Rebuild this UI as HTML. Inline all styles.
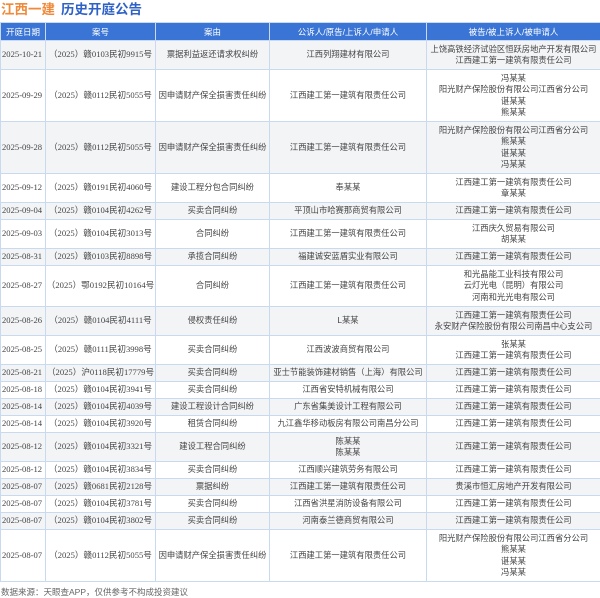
<!DOCTYPE html>
<html><head><meta charset="utf-8"><style>
*{margin:0;padding:0;box-sizing:border-box}
body{width:600px;height:597px;background:#fff;font-family:"Liberation Sans","Noto Sans CJK SC",sans-serif;color:#333;position:relative;overflow:hidden}
.title{position:absolute;left:1px;top:1px;font-size:13.5px;font-weight:bold;line-height:18px}
.title .a{color:#f08a3b}.title .b{color:#2f62c6;margin-left:6px}
table{position:absolute;left:0;top:22px;width:600px;border-collapse:collapse;table-layout:fixed;font-size:8.3px}
th{background:#3a74d4;color:#fff;height:18px;font-weight:normal;font-size:8.5px;border:1px solid #c9d9ef;line-height:10px}
td{border:1px solid #c9d9ef;text-align:center;vertical-align:middle;line-height:11.4px;padding:0;color:#444}
tr.g td{background:#f3f4f6}
tr.h1{height:17px}tr.h2{height:29px}tr.h3{height:41px}tr.h4{height:52px}
td.d{font-family:"Liberation Serif","Noto Serif CJK SC",serif;font-size:8.6px;text-align:left;padding-left:1px}
td.n{font-family:"Liberation Serif","Noto Sans CJK SC",serif;font-size:8.6px}
.foot{position:absolute;left:1px;top:586px;font-size:8.5px;color:#666}
</style></head><body>
<div class="title"><span class="a">江西一建</span><span class="b">历史开庭公告</span></div>
<table>
<colgroup><col style="width:45px"><col style="width:110px"><col style="width:114px"><col style="width:157px"><col style="width:174px"></colgroup>
<tr><th>开庭日期</th><th>案号</th><th>案由</th><th>公诉人/原告/上诉人/申请人</th><th>被告/被上诉人/被申请人</th></tr>
<tr class="g h2"><td class="d">2025-10-21</td><td class="n">（2025）赣0103民初9915号</td><td>票据利益返还请求权纠纷</td><td>江西列翔建材有限公司</td><td>上饶高铁经济试验区恒跃房地产开发有限公司<br>江西建工第一建筑有限责任公司</td></tr>
<tr class="h4"><td class="d">2025-09-29</td><td class="n">（2025）赣0112民初5055号</td><td>因申请财产保全损害责任纠纷</td><td>江西建工第一建筑有限责任公司</td><td>冯某某<br>阳光财产保险股份有限公司江西省分公司<br>谌某某<br>熊某某</td></tr>
<tr class="g h4"><td class="d">2025-09-28</td><td class="n">（2025）赣0112民初5055号</td><td>因申请财产保全损害责任纠纷</td><td>江西建工第一建筑有限责任公司</td><td>阳光财产保险股份有限公司江西省分公司<br>熊某某<br>谌某某<br>冯某某</td></tr>
<tr class="h2"><td class="d">2025-09-12</td><td class="n">（2025）赣0191民初4060号</td><td>建设工程分包合同纠纷</td><td>奉某某</td><td>江西建工第一建筑有限责任公司<br>章某某</td></tr>
<tr class="g h1"><td class="d">2025-09-04</td><td class="n">（2025）赣0104民初4262号</td><td>买卖合同纠纷</td><td>平顶山市哈赛那商贸有限公司</td><td>江西建工第一建筑有限责任公司</td></tr>
<tr class="h2"><td class="d">2025-09-03</td><td class="n">（2025）赣0104民初3013号</td><td>合同纠纷</td><td>江西建工第一建筑有限责任公司</td><td>江西庆久贸易有限公司<br>胡某某</td></tr>
<tr class="g h1"><td class="d">2025-08-31</td><td class="n">（2025）赣0103民初8898号</td><td>承揽合同纠纷</td><td>福建诚安蓝盾实业有限公司</td><td>江西建工第一建筑有限责任公司</td></tr>
<tr class="h3"><td class="d">2025-08-27</td><td class="n">（2025）鄂0192民初10164号</td><td>合同纠纷</td><td>江西建工第一建筑有限责任公司</td><td>和光晶能工业科技有限公司<br>云灯光电（昆明）有限公司<br>河南和光光电有限公司</td></tr>
<tr class="g h2"><td class="d">2025-08-26</td><td class="n">（2025）赣0104民初4111号</td><td>侵权责任纠纷</td><td>L某某</td><td>江西建工第一建筑有限责任公司<br>永安财产保险股份有限公司南昌中心支公司</td></tr>
<tr class="h2"><td class="d">2025-08-25</td><td class="n">（2025）赣0111民初3998号</td><td>买卖合同纠纷</td><td>江西波波商贸有限公司</td><td>张某某<br>江西建工第一建筑有限责任公司</td></tr>
<tr class="g h1"><td class="d">2025-08-21</td><td class="n">（2025）沪0118民初17779号</td><td>买卖合同纠纷</td><td>亚士节能装饰建材销售（上海）有限公司</td><td>江西建工第一建筑有限责任公司</td></tr>
<tr class="h1"><td class="d">2025-08-18</td><td class="n">（2025）赣0104民初3941号</td><td>买卖合同纠纷</td><td>江西省安特机械有限公司</td><td>江西建工第一建筑有限责任公司</td></tr>
<tr class="g h1"><td class="d">2025-08-14</td><td class="n">（2025）赣0104民初4039号</td><td>建设工程设计合同纠纷</td><td>广东省集美设计工程有限公司</td><td>江西建工第一建筑有限责任公司</td></tr>
<tr class="h1"><td class="d">2025-08-14</td><td class="n">（2025）赣0104民初3920号</td><td>租赁合同纠纷</td><td>九江鑫华移动板房有限公司南昌分公司</td><td>江西建工第一建筑有限责任公司</td></tr>
<tr class="g h2"><td class="d">2025-08-12</td><td class="n">（2025）赣0104民初3321号</td><td>建设工程合同纠纷</td><td>陈某某<br>陈某某</td><td>江西建工第一建筑有限责任公司</td></tr>
<tr class="h1"><td class="d">2025-08-12</td><td class="n">（2025）赣0104民初3834号</td><td>买卖合同纠纷</td><td>江西顺兴建筑劳务有限公司</td><td>江西建工第一建筑有限责任公司</td></tr>
<tr class="g h1"><td class="d">2025-08-07</td><td class="n">（2025）赣0681民初2128号</td><td>票据纠纷</td><td>江西建工第一建筑有限责任公司</td><td>贵溪市恒汇房地产开发有限公司</td></tr>
<tr class="h1"><td class="d">2025-08-07</td><td class="n">（2025）赣0104民初3781号</td><td>买卖合同纠纷</td><td>江西省洪星消防设备有限公司</td><td>江西建工第一建筑有限责任公司</td></tr>
<tr class="g h1"><td class="d">2025-08-07</td><td class="n">（2025）赣0104民初3802号</td><td>买卖合同纠纷</td><td>河南泰兰德商贸有限公司</td><td>江西建工第一建筑有限责任公司</td></tr>
<tr class="h4"><td class="d">2025-08-07</td><td class="n">（2025）赣0112民初5055号</td><td>因申请财产保全损害责任纠纷</td><td>江西建工第一建筑有限责任公司</td><td>阳光财产保险股份有限公司江西省分公司<br>熊某某<br>谌某某<br>冯某某</td></tr>
</table>
<div class="foot">数据来源：天眼查APP，仅供参考不构成投资建议</div>
</body></html>
